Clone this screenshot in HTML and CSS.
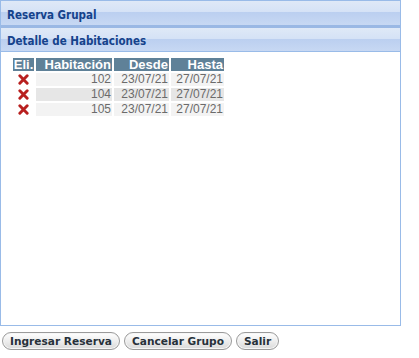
FILE: index.html
```html
<!DOCTYPE html>
<html lang="es">
<head>
  <meta charset="UTF-8" />
  <title>Reserva Grupal</title>
  <link rel="stylesheet" href="styles.css">
</head>
<body>

<div class="panel">
  <div class="bar bar-top">Reserva Grupal</div>
  <div class="bar">Detalle de Habitaciones</div>
  <div class="panel-body">
    <table class="rooms">
      <thead>
        <tr>
          <th class="del">Eli.</th>
          <th class="c-hab">Habitación</th>
          <th class="c-desde">Desde</th>
          <th class="c-hasta">Hasta</th>
        </tr>
      </thead>
      <tbody>
        <tr>
          <td class="del"><svg class="x" viewBox="0 0 12 12"><path d="M2 2 L10 10 M10 2 L2 10"/></svg></td>
          <td>102</td><td>23/07/21</td><td>27/07/21</td>
        </tr>
        <tr class="alt">
          <td class="del"><svg class="x" viewBox="0 0 12 12"><path d="M2 2 L10 10 M10 2 L2 10"/></svg></td>
          <td>104</td><td>23/07/21</td><td>27/07/21</td>
        </tr>
        <tr>
          <td class="del"><svg class="x" viewBox="0 0 12 12"><path d="M2 2 L10 10 M10 2 L2 10"/></svg></td>
          <td>105</td><td>23/07/21</td><td>27/07/21</td>
        </tr>
      </tbody>
    </table>
  </div>
</div>

<div class="actions">
  <button type="button">Ingresar Reserva</button>
  <button type="button">Cancelar Grupo</button>
  <button type="button">Salir</button>
</div>

</body>
</html>
```

FILE: styles.css
```css
body {
  margin: 0;
  background: #fff;
  font-family: "DejaVu Sans Condensed", "DejaVu Sans", sans-serif;
}

.panel {
  width: 401px;
  box-sizing: border-box;
  border: 1px solid #99bbe8;
}

.bar {
  height: 24px;
  box-sizing: border-box;
  padding: 6px 0 0 6px;
  font-size: 11.5px;
  font-weight: bold;
  color: #15428b;
  background: linear-gradient(#dfe9f7 0, #d5e2f6 46%, #bbcff0 47%, #c7d8f3 100%);
  border-bottom: 1px solid #99bbe8;
}

.bar-top {
  height: 27px;
  padding-top: 7px;
  border-bottom: 3px solid #9ab8e4;
}

.panel-body {
  height: 269px;
  padding: 4px 0 0 10px;
}

.rooms {
  border-collapse: separate;
  border-spacing: 2px;
  font-family: "Liberation Sans", Arial, sans-serif;
}

.rooms th {
  background: #5f8198;
  color: #fff;
  font-size: 13px;
  font-weight: bold;
  text-align: right;
  padding: 0 1px 0 0;
  line-height: 13px;
}

.rooms th.del {
  width: 21px;
  padding: 0;
  text-align: center;
}

.rooms th.c-hab {
  width: 75px;
}

.rooms th.c-desde {
  width: 54px;
}

.rooms th.c-hasta {
  width: 52px;
}

.rooms td {
  background: #f3f3f3;
  color: #6b6b6b;
  font-size: 12px;
  text-align: right;
  padding: 0 1px 0 0;
  line-height: 13px;
}

.rooms tr.alt td {
  background: #e6e6e6;
}

.rooms tr td.del {
  background: #fff;
  text-align: center;
  padding: 0;
}

.x {
  display: block;
  width: 11px;
  height: 11px;
  margin: 0 auto;
  stroke: #b8201f;
  stroke-width: 3.2;
  stroke-linecap: round;
  fill: none;
}

.actions {
  display: flex;
  gap: 4px;
  padding: 6px 0 0 2px;
}

.actions button {
  height: 18px;
  padding: 0 7px;
  border: 1px solid #9a9a9a;
  border-radius: 9px;
  background: linear-gradient(#ffffff, #ececec 55%, #d9d9d9);
  font-family: "DejaVu Sans", sans-serif;
  font-size: 10.6px;
  font-weight: bold;
  color: #27313a;
  box-shadow: inset 0 0 0 1px #f6f6f6;
}
```
